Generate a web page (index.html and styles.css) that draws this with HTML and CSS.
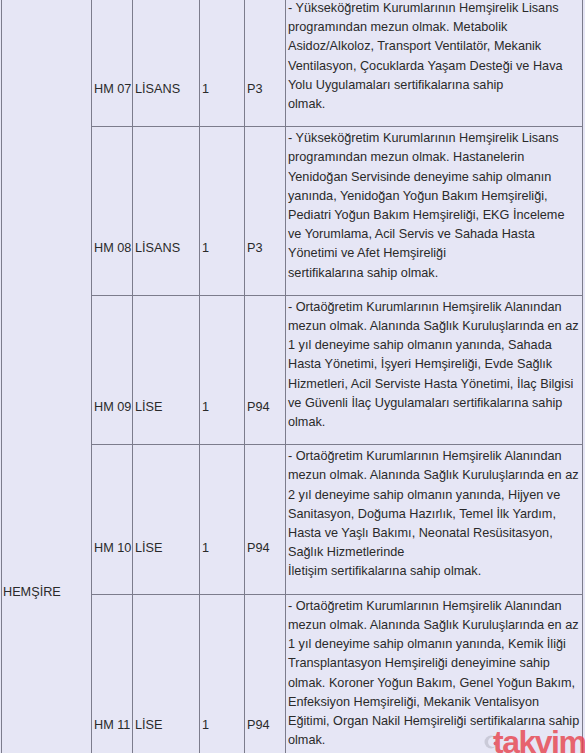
FILE: index.html
```html
<!DOCTYPE html>
<html lang="tr">
<head>
<meta charset="utf-8">
<title>Hemşire kadroları</title>
<link rel="stylesheet" href="styles.css">
</head>
<body>
<div class="page">
<table class="grid">
<colgroup>
<col class="c-unit"><col class="c-code"><col class="c-level"><col class="c-count"><col class="c-score"><col class="c-desc">
</colgroup>
<tbody>
<tr>
<td rowspan="5" class="unit">HEMŞİRE</td>
<td class="short pb-a">HM 07</td>
<td class="short pb-a">LİSANS</td>
<td class="short pb-a">1</td>
<td class="short pb-a">P3</td>
<td class="desc">- Yükseköğretim Kurumlarının Hemşirelik Lisans<br>programından mezun olmak. Metabolik<br>Asidoz/Alkoloz, Transport Ventilatör, Mekanik<br>Ventilasyon, Çocuklarda Yaşam Desteği ve Hava<br>Yolu Uygulamaları sertifikalarına sahip<br>olmak.</td>
</tr>
<tr>
<td class="short pb-b">HM 08</td>
<td class="short pb-b">LİSANS</td>
<td class="short pb-b">1</td>
<td class="short pb-b">P3</td>
<td class="desc">- Yükseköğretim Kurumlarının Hemşirelik Lisans<br>programından mezun olmak. Hastanelerin<br>Yenidoğan Servisinde deneyime sahip olmanın<br>yanında, Yenidoğan Yoğun Bakım Hemşireliği,<br>Pediatri Yoğun Bakım Hemşireliği, EKG İnceleme<br>ve Yorumlama, Acil Servis ve Sahada Hasta<br>Yönetimi ve Afet Hemşireliği<br>sertifikalarına sahip olmak.</td>
</tr>
<tr>
<td class="short pb-e">HM 09</td>
<td class="short pb-e">LİSE</td>
<td class="short pb-e">1</td>
<td class="short pb-e">P94</td>
<td class="desc">- Ortaöğretim Kurumlarının Hemşirelik Alanından<br>mezun olmak. Alanında Sağlık Kuruluşlarında en az<br>1 yıl deneyime sahip olmanın yanında, Sahada<br>Hasta Yönetimi, İşyeri Hemşireliği, Evde Sağlık<br>Hizmetleri, Acil Serviste Hasta Yönetimi, İlaç Bilgisi<br>ve Güvenli İlaç Uygulamaları sertifikalarına sahip<br>olmak.</td>
</tr>
<tr>
<td class="short pb-c">HM 10</td>
<td class="short pb-c">LİSE</td>
<td class="short pb-c">1</td>
<td class="short pb-c">P94</td>
<td class="desc">- Ortaöğretim Kurumlarının Hemşirelik Alanından<br>mezun olmak. Alanında Sağlık Kuruluşlarında en az<br>2 yıl deneyime sahip olmanın yanında, Hijyen ve<br>Sanitasyon, Doğuma Hazırlık, Temel İlk Yardım,<br>Hasta ve Yaşlı Bakımı, Neonatal Resüsitasyon,<br>Sağlık Hizmetlerinde<br>İletişim sertifikalarına sahip olmak.</td>
</tr>
<tr>
<td class="short pb-d">HM 11</td>
<td class="short pb-d">LİSE</td>
<td class="short pb-d">1</td>
<td class="short pb-d">P94</td>
<td class="desc">- Ortaöğretim Kurumlarının Hemşirelik Alanından<br>mezun olmak. Alanında Sağlık Kuruluşlarında en az<br>1 yıl deneyime sahip olmanın yanında, Kemik İliği<br>Transplantasyon Hemşireliği deneyimine sahip<br>olmak. Koroner Yoğun Bakım, Genel Yoğun Bakım,<br>Enfeksiyon Hemşireliği, Mekanik Ventalisyon<br>Eğitimi, Organ Nakil Hemşireliği sertifikalarına sahip<br>olmak.</td>
</tr>
</tbody>
</table>
<div class="watermark">
<svg class="wm-moon" width="14" height="14" viewBox="0 0 14 14"><circle cx="7" cy="7" r="6.5" fill="#c4c4d2"/><circle cx="9" cy="7" r="5" fill="#e6e6f5"/><circle cx="11.5" cy="8.5" r="2" fill="#e04650"/></svg>
<span class="wm-text">takvim</span>
<span class="wm-dom">.com.tr</span>
</div>
</div>
</body>
</html>
```
FILE: styles.css
```css
html, body {
  margin: 0;
  padding: 0;
  background: #e6e6f5;
}
.page {
  position: relative;
  width: 585px;
  height: 753px;
  overflow: hidden;
}
.grid {
  border-collapse: collapse;
  table-layout: fixed;
  width: 582px;
  margin-top: -4px;
  margin-left: 1px;
  background: #e6e6f5;
  font-family: "Liberation Sans", Arial, sans-serif;
  font-size: 12.7px;
  line-height: 19.2px;
  color: #2a2a2a;
}
.grid td {
  border: 1px solid #7c7c8c;
  padding: 0 2px;
  white-space: nowrap;
  overflow: hidden;
}
.c-unit { width: 90px; }
.c-code { width: 41px; }
.c-level { width: 67px; }
.c-count { width: 45px; }
.c-score { width: 41px; }
.c-desc { width: 297px; }
.unit {
  vertical-align: top;
  padding-top: 586px !important;
  padding-left: 1px !important;
}
.short {
  vertical-align: bottom;
}
.pb-a { padding-bottom: 27px !important; }
.pb-b { padding-bottom: 37px !important; }
.pb-e { padding-bottom: 27px !important; }
.pb-c { padding-bottom: 35px !important; }
.pb-d { padding-bottom: 27px !important; }
.desc {
  vertical-align: top;
  padding: 2px 2px 12px 2px !important;
}
.watermark {
  position: absolute;
  left: 484px;
  top: 727px;
  display: flex;
  align-items: center;
  opacity: 0.8;
}
.wm-moon {
  margin-right: -5px;
}
.wm-text {
  font-family: "Liberation Sans", Arial, sans-serif;
  font-weight: bold;
  font-size: 32px;
  line-height: 30px;
  letter-spacing: -1.5px;
  color: #e8434d;
}
.wm-dom {
  font-family: "Liberation Sans", Arial, sans-serif;
  font-size: 5px;
  line-height: 5px;
  color: #d88;
  writing-mode: vertical-rl;
}
```
